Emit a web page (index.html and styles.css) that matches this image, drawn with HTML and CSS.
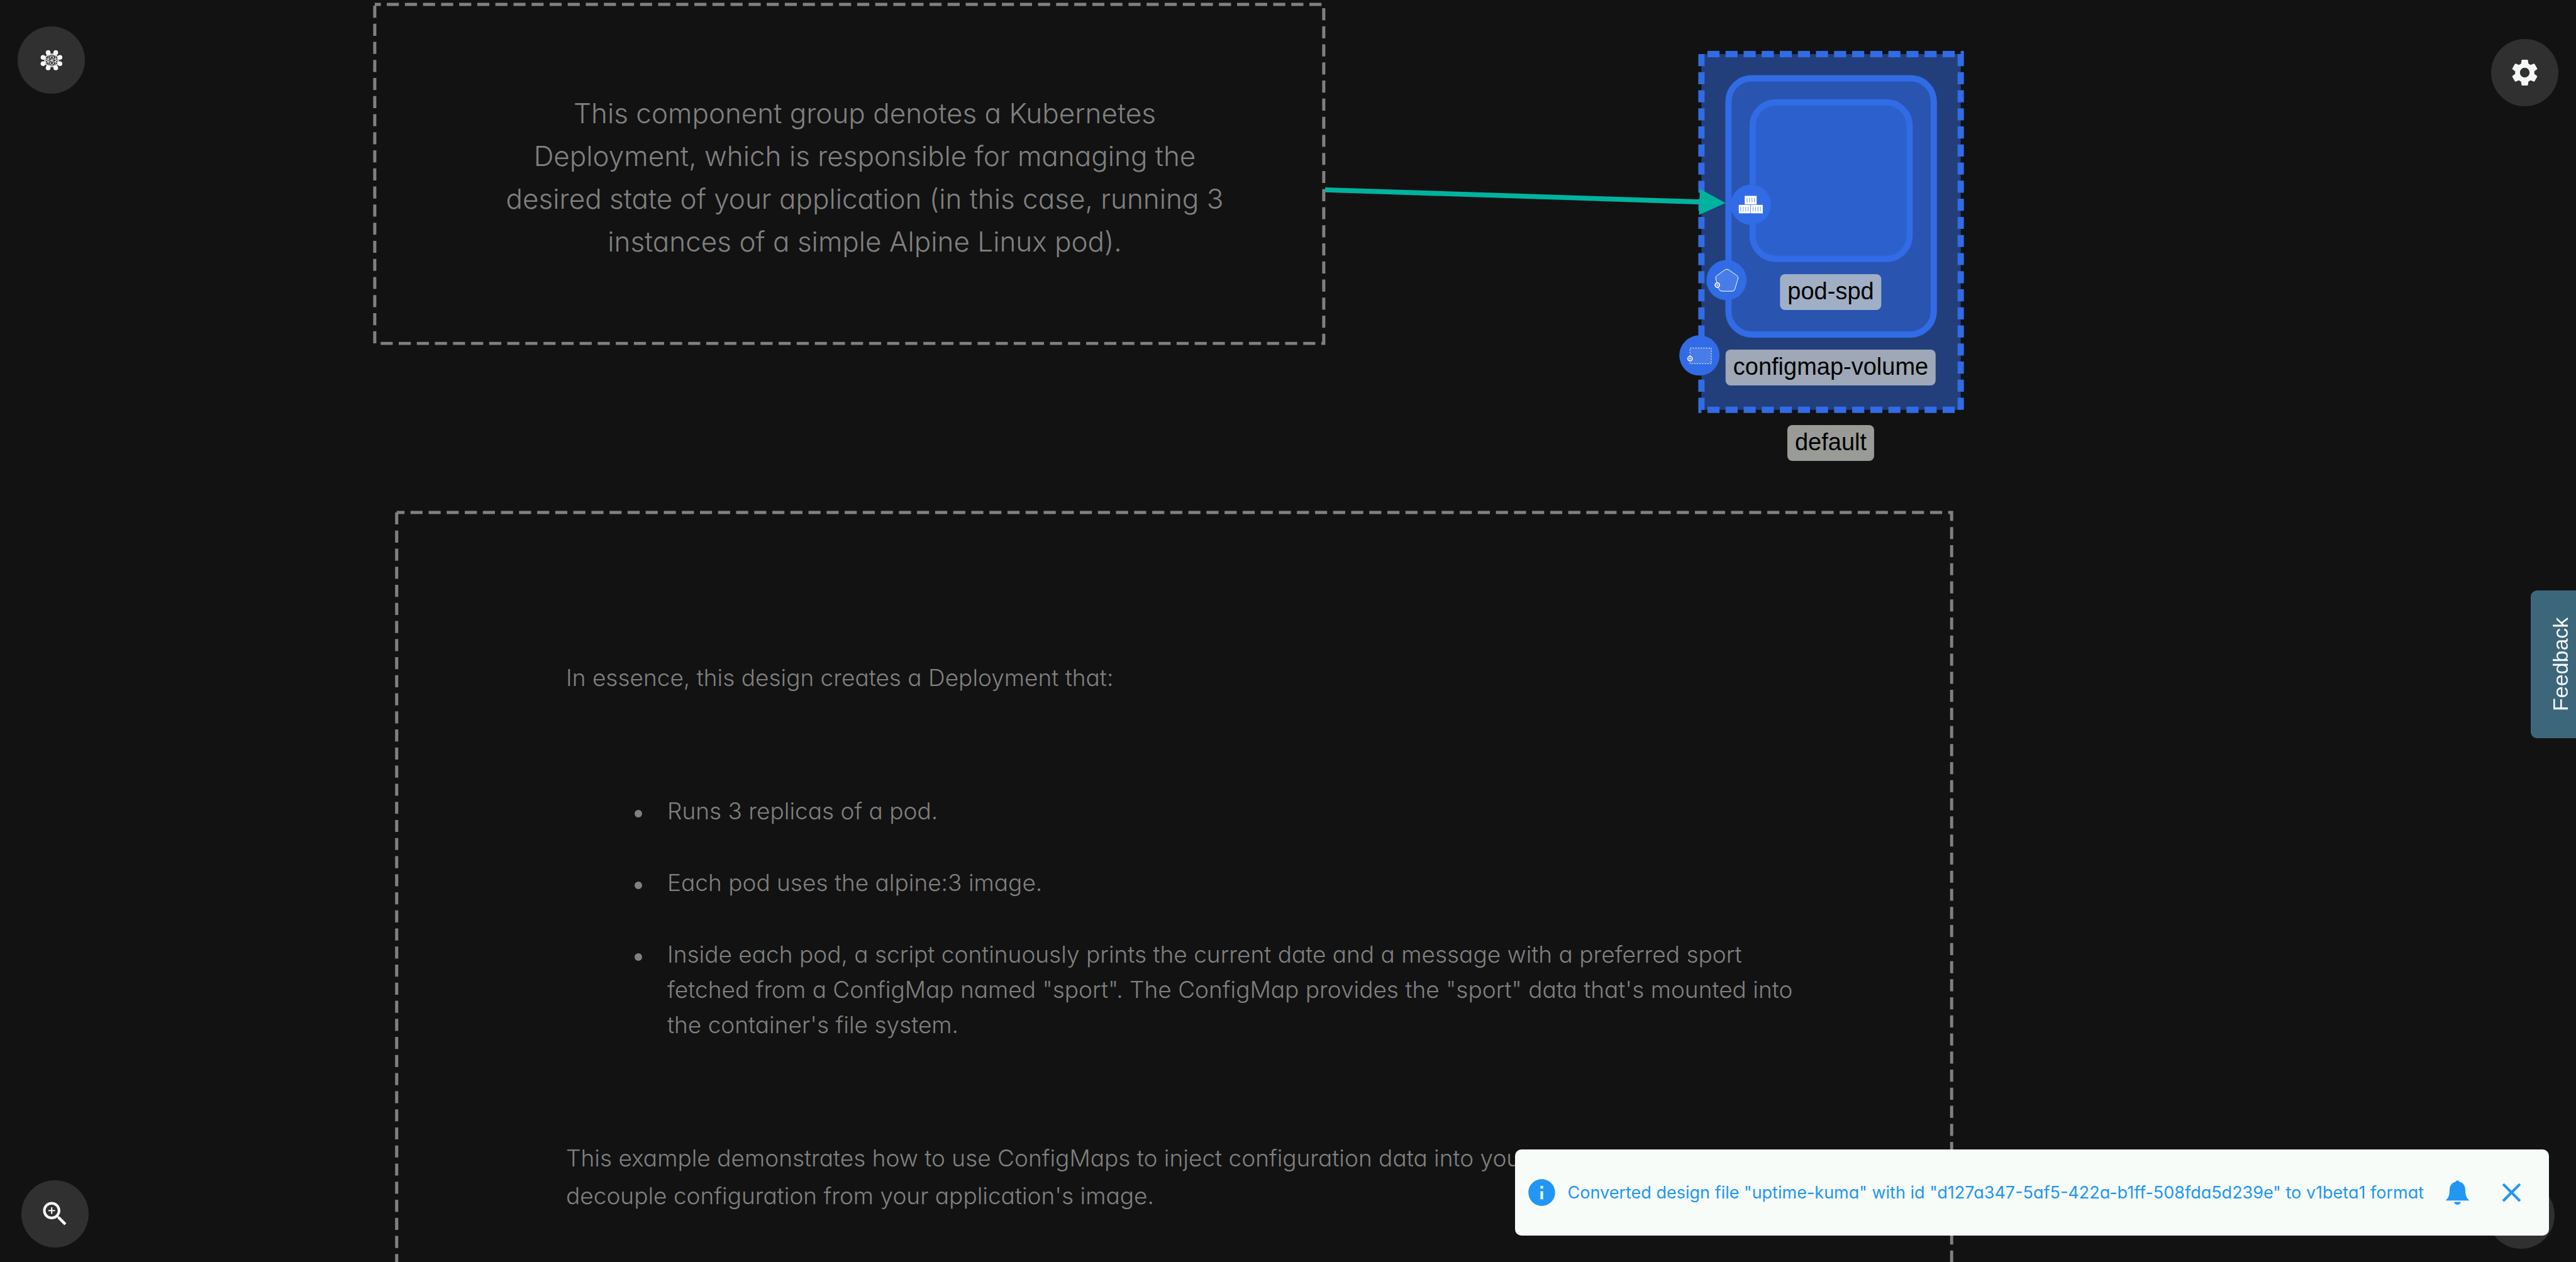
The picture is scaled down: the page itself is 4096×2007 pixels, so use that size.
FILE: index.html
```html
<!DOCTYPE html>
<html lang="en">
<head>
<meta charset="utf-8">
<title>Design canvas</title>
<link rel="stylesheet" href="styles.css">
</head>
<body>
<main class="canvas">
  <svg class="graph" aria-hidden="true">
    <g transform="scale(.7111)">
      <g class="note-outline">
        <rect x="838" y="10" width="2122" height="758" stroke-dashoffset="13.5"/>
        <path d="M887 1146H4364V2900" stroke-dashoffset="9.5"/>
        <path d="M887 1146V2900"/>
      </g>
      <g class="cluster">
        <rect class="cluster-outer" x="3804.5" y="121" width="579.8" height="795.5"/>
        <rect class="cluster-middle" x="3865" y="175" width="459" height="573" rx="52"/>
        <rect class="cluster-inner" x="3919" y="229" width="351" height="350" rx="52"/>
      </g>
      <g class="edge">
        <path class="edge-line" d="M2963 424.500L3806 451.800"/>
        <path class="edge-head" d="M3858.500 453.700L3801 422.700L3799 480.700Z"/>
      </g>
      <g class="badges">
        <circle cx="3915" cy="458" r="45"/>
        <circle cx="3860.500" cy="626.500" r="45"/>
        <circle cx="3800" cy="795" r="45"/>
      </g>
      <g fill="#fff">
        <path d="M3901.300 438h26.700v19h-26.700zM3888 458h26v19h-26zM3915 458h26.700v19h-26.700z"/>
        <path stroke="#316ce6" d="M3906.500 442.500v10M3912 442.500v10M3917.500 442.500v10M3923 442.500v10M3892.500 462.500v10M3898 462.500v10M3903.500 462.500v10M3909 462.500v10M3920 462.500v10M3925.500 462.500v10M3931 462.500v10M3936.500 462.500v10"/>
      </g>
      <g class="glyph">
        <path d="M3857 603.500Q3861.300 600.500 3865.600 603.500L3884 616.500Q3887.500 619 3886.300 623L3879.500 646Q3878 651.300 3873 651.300H3850Q3845.500 651.300 3843.500 646L3836.500 623Q3835.500 618.500 3839 616.500Z"/>
        <circle class="ring" cx="3840" cy="637.700" r="5"/>
        <circle class="hub" cx="3840" cy="637.700" r="2.500"/>
        <path stroke-dasharray="3 2.900" d="M3779 778.300h47.600v35h-47.600z"/>
        <circle class="ring" cx="3779" cy="802" r="5"/>
        <circle class="hub" cx="3779" cy="802" r="2.500"/>
      </g>
    </g>
  </svg>

  <section class="note note-summary">
    <p>This component group denotes a Kubernetes<br>Deployment, which is responsible for managing the<br>desired state of your application (in this case, running 3<br>instances of a simple Alpine Linux pod).</p>
  </section>

  <section class="note note-details">
    <p>In essence, this design creates a Deployment that:</p>
    <ul>
      <li><span>Runs 3 replicas of a pod.</span></li>
      <li><span>Each pod uses the alpine:3 image.</span></li>
      <li><span>Inside each pod, a script continuously prints the current date and a message with a preferred sport<br>fetched from a ConfigMap named "sport". The ConfigMap provides the "sport" data that's mounted into<br>the container's file system.</span></li>
    </ul>
    <p>This example demonstrates how to use ConfigMaps to inject configuration data into your containers and<br>decouple configuration from your application's image.</p>
  </section>

  <span class="label label-pod">pod-spd</span>
  <span class="label label-deployment">configmap-volume</span>
  <span class="label label-namespace">default</span>
</main>

<button class="fab fab-mesh" aria-label="Layers">
  <svg class="icon-mesh" viewBox="262 324 160 160" aria-hidden="true">
    <g fill="none" stroke="#f6f8f7" stroke-width="3.500">
      <path d="M319 352V454M370 352V454M319 352L370 454M370 352L319 454M285 384L398 426M398 384L285 426M319 352L398 426M370 352L285 426M319 454L398 384M370 454L285 384M319 352L398 384M370 352L285 384M319 454L398 426M370 454L285 426M319 352L285 426M370 352L398 426M285 384L319 454M398 384L370 454"/>
      <rect x="301" y="364" width="83" height="78" rx="28"/>
    </g>
    <g fill="#f6f8f7"><circle cx="319" cy="352" r="16"/><circle cx="370" cy="352" r="16"/><circle cx="398" cy="384" r="16"/><circle cx="398" cy="426" r="16"/><circle cx="370" cy="454" r="16"/><circle cx="319" cy="454" r="16"/><circle cx="285" cy="426" r="16"/><circle cx="285" cy="384" r="16"/></g>
  </svg>
</button>

<button class="fab fab-settings" aria-label="Settings">
  <svg class="icon" viewBox="0 0 24 24" aria-hidden="true"><path d="M19.140 12.940c.04-.3.060-.61.060-.94 0-.32-.020-.64-.070-.94l2.030-1.580c.18-.14.230-.41.120-.61l-1.920-3.320c-.12-.22-.37-.29-.59-.22l-2.390.96c-.5-.38-1.030-.7-1.620-.94l-.36-2.540c-.04-.24-.24-.41-.48-.41h-3.840c-.24 0-.43.170-.47.410l-.36 2.540c-.59.240-1.130.570-1.620.940l-2.390-.96c-.22-.080-.47 0-.59.220L2.740 8.870c-.12.210-.080.470.120.610l2.030 1.580c-.050.300-.090.630-.090.940s.020.640.070.940l-2.030 1.580c-.18.140-.23.410-.12.610l1.920 3.320c.12.220.37.290.59.220l2.390-.96c.5.380 1.030.7 1.620.940l.36 2.540c.050.240.24.410.48.410h3.840c.24 0 .44-.17.470-.41l.36-2.540c.59-.24 1.130-.56 1.620-.94l2.390.96c.22.080.47 0 .59-.22l1.920-3.320c.12-.22.070-.47-.12-.61zM12 15.600c-1.980 0-3.600-1.620-3.600-3.600s1.620-3.600 3.600-3.600 3.600 1.620 3.600 3.600-1.620 3.600-3.600 3.600"/></svg>
</button>

<button class="fab fab-zoom" aria-label="Zoom in">
  <svg class="icon" viewBox="0 0 24 24" aria-hidden="true"><path d="M15.500 14h-.79l-.28-.27C15.410 12.590 16 11.110 16 9.500 16 5.910 13.090 3 9.500 3S3 5.910 3 9.500 5.910 16 9.500 16c1.610 0 3.090-.59 4.230-1.570l.27.280v.79l5 4.990L20.490 19zm-6 0C7.010 14 5 11.990 5 9.500S7.010 5 9.500 5 14 7.010 14 9.500 11.990 14 9.500 14m2.500-4h-2v2H9v-2H7V9h2V7h1v2h2z"/></svg>
</button>

<button class="fab fab-more" aria-label="More"></button>

<button class="feedback">Feedback</button>

<div class="toast" role="status">
  <svg class="icon" viewBox="0 0 24 24" aria-hidden="true"><path d="M12 2C6.480 2 2 6.480 2 12s4.480 10 10 10 10-4.480 10-10S17.520 2 12 2m1 15h-2v-6h2zm0-8h-2V7h2z"/></svg>
  <span class="toast-text">Converted design file "uptime-kuma" with id "d127a347-5af5-422a-b1ff-508fda5d239e" to v1beta1 format</span>
  <button class="toast-action" aria-label="Notifications">
    <svg class="icon" viewBox="0 0 24 24" aria-hidden="true"><path d="M3.100 18c1.600-1.300 3-3.200 3-7.500C6.100 6.900 7.700 4.600 10.600 4 10.800 3.300 11.300 3 12 3s1.200.3 1.400 1c2.900.6 4.500 2.900 4.500 6.500 0 4.300 1.400 6.200 3 7.500zM9.500 19h5c0 1.100-1.100 2-2.500 2s-2.500-.9-2.500-2z"/></svg>
  </button>
  <button class="toast-action" aria-label="Close">
    <svg class="icon" viewBox="0 0 24 24" aria-hidden="true"><path d="M19 6.410 17.590 5 12 10.590 6.410 5 5 6.410 10.590 12 5 17.590 6.410 19 12 13.410 17.590 19 19 17.590 13.410 12z"/></svg>
  </button>
</div>
</body>
</html>
```
FILE: styles.css
```css
* {
  box-sizing: border-box;
}

body {
  margin: 0;
  min-height: 100vh;
  overflow: hidden;
  background: #121212;
  font-family: "Inter", "Liberation Sans", sans-serif;
}

button {
  margin: 0;
  padding: 0;
  border: 0;
  cursor: pointer;
}

/* Canvas */
.canvas {
  position: relative;
  height: 100vh;
  overflow: hidden;
}

.graph {
  position: absolute;
  inset: 0;
  width: 100%;
  height: 100%;
}

.note-outline {
  fill: none;
  stroke: #808080;
  stroke-width: 7;
  stroke-dasharray: 27 13.45;
}

.cluster {
  stroke: #316ce6;
  stroke-width: 14;
}

.cluster-outer {
  fill: #233f7b;
  stroke-dasharray: 27 13.45;
  stroke-dashoffset: 27;
}

.cluster-middle { fill: #2954b0; }
.cluster-inner { fill: #2c60cc; }

.edge-line {
  stroke: #00b39f;
  stroke-width: 11;
}

.edge-head { fill: #00b39f; }
.badges { fill: #316ce6; }

.glyph {
  fill: #487ce8;
  stroke: #fff;
  stroke-width: 1.4;
}

.glyph .ring {
  fill: #316ce6;
  stroke-width: 2.4;
}

.glyph .hub {
  fill: #b9cdf6;
  stroke: none;
}

.note {
  position: absolute;
  color: #808080;
  font-weight: 350;
  font-feature-settings: "cv11";
  white-space: nowrap;
}

.note p,
.note ul {
  margin: 0;
}

.note-summary {
  left: 594px;
  top: 5px;
  width: 1514px;
  padding: 141px 0 0 48px;
  font-size: 44px;
  line-height: 68px;
  text-align: center;
}

.note-details {
  left: 628px;
  top: 813px;
  width: 2478px;
  padding: 235px 0 0 272px;
  font-size: 37px;
  line-height: 60px;
}

.note-details ul {
  display: flex;
  flex-direction: column;
  gap: 58px;
  margin: 154px 0;
  padding-left: 109px;
  line-height: 56px;
}

.note-details li {
  display: flex;
  gap: 40px;
}

.note-details li::before {
  content: "";
  flex: none;
  width: 12px;
  height: 12px;
  margin-top: 26px;
  border-radius: 50%;
  background: #808080;
}

.label {
  position: absolute;
  left: 2911px;
  padding: 0 12px 2px;
  border-radius: 8px;
  background: rgba(211, 213, 208, .7);
  color: #000;
  font-family: "Liberation Sans", sans-serif;
  font-size: 38px;
  line-height: 55px;
  white-space: nowrap;
  transform: translateX(-50%);
}

.label-pod { top: 436px; }
.label-deployment { top: 556px; }
.label-namespace { top: 676px; }

/* Floating buttons */
.fab {
  position: fixed;
  display: grid;
  place-items: center;
  width: 107px;
  height: 107px;
  border-radius: 50%;
  background: #303030;
  color: #f6f8f7;
}

.fab-mesh { left: 28px; top: 42px; }
.fab-settings { right: 28px; top: 62px; }
.fab-zoom { left: 34px; bottom: 23px; }
.fab-more { right: 34px; bottom: 21px; }

.icon {
  display: block;
  width: 51px;
  height: 51px;
  fill: currentColor;
}

.icon-mesh {
  width: 38px;
  height: 38px;
}

.feedback {
  position: fixed;
  right: 0;
  top: 939px;
  width: 72px;
  height: 235px;
  padding-right: 22px;
  border-radius: 0 10px 10px 0;
  background: #3c677a;
  color: #f6f8f7;
  font-family: "Liberation Sans", sans-serif;
  font-size: 34px;
  line-height: 40px;
  writing-mode: vertical-rl;
  transform: rotate(180deg);
}

/* Toast */
.toast {
  position: fixed;
  right: 43px;
  bottom: 42px;
  display: flex;
  align-items: center;
  gap: 16px;
  height: 137px;
  padding: 0 34px 0 17px;
  border-radius: 10px;
  background: #f7fcf9;
  color: #2196f3;
}

.toast-text {
  font-size: 27px;
  font-feature-settings: "cv11";
  line-height: 40px;
  white-space: nowrap;
}

.toast-action {
  margin-left: 12px;
  background: none;
  color: inherit;
}

.toast-action + .toast-action {
  margin-left: 19px;
}
```
